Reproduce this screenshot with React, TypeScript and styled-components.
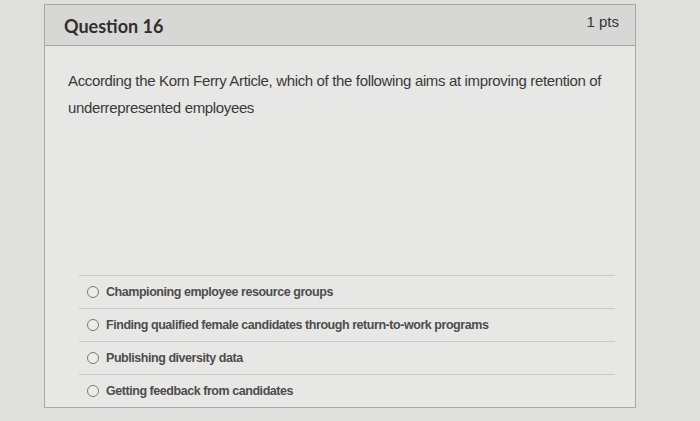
import React from 'react';
import styled, { createGlobalStyle } from 'styled-components';

const answers = [
  'Championing employee resource groups',
  'Finding qualified female candidates through return-to-work programs',
  'Publishing diversity data',
  'Getting feedback from candidates',
];

const GlobalStyle = createGlobalStyle`
  html, body {
    margin: 0;
    padding: 0;
    background: #dfdfde;
  }
`;

const Page = styled.div`
  width: 700px;
  height: 421px;
  padding: 4px 0 0 44px;
  box-sizing: border-box;
  overflow: hidden;
`;

const Card = styled.div`
  width: 592px;
  height: 404px;
  display: flex;
  flex-direction: column;
  box-sizing: border-box;
  border: 1px solid #a9a9a9;
  background: #e7e7e6;
`;

const Header = styled.div`
  height: 41px;
  flex-shrink: 0;
  display: flex;
  justify-content: space-between;
  align-items: center;
  padding: 0 16px 0 19px;
  box-sizing: border-box;
  background: #d7d7d6;
  border-bottom: 1px solid #a4a4a4;
`;

const Title = styled.div`
  font-family: Lato, 'Liberation Sans', sans-serif;
  font-size: 18px;
  font-weight: 700;
  color: #2f2f2f;
  padding-top: 2px;
`;

const Points = styled.div`
  font-family: 'Liberation Sans', Arial, sans-serif;
  font-size: 15px;
  color: #333;
  align-self: flex-start;
  padding-top: 8px;
`;

const Body = styled.div`
  flex: 1;
  display: flex;
  flex-direction: column;
  padding: 21px 20px 0 23px;
`;

const QuestionText = styled.p`
  margin: 0;
  font-family: 'Liberation Sans', Arial, sans-serif;
  font-size: 15px;
  line-height: 27px;
  letter-spacing: -0.35px;
  color: #3a3a3a;
  max-width: 545px;
`;

const AnswerList = styled.div`
  margin: auto 0 0 11px;
  display: flex;
  flex-direction: column;
`;

const AnswerRow = styled.label`
  height: 33px;
  display: flex;
  align-items: center;
  gap: 7px;
  padding-left: 8px;
  border-top: 1px solid #c9c9c8;
  font-family: 'Liberation Sans', Arial, sans-serif;
  font-size: 12.5px;
  font-weight: 700;
  letter-spacing: -0.45px;
  color: #4d4d4d;
  box-sizing: border-box;
`;

const Radio = styled.span`
  width: 12px;
  height: 12px;
  border-radius: 50%;
  border: 1.5px solid #7a7a7a;
  box-sizing: border-box;
  background: #ececeb;
`;

const App = () => (
  <Page>
    <GlobalStyle />
    <Card>
      <Header>
        <Title>Question 16</Title>
        <Points>1 pts</Points>
      </Header>
      <Body>
        <QuestionText>
          According the Korn Ferry Article, which of the following aims at improving retention of
          underrepresented employees
        </QuestionText>
        <AnswerList>
          {answers.map((a) => (
            <AnswerRow key={a}>
              <Radio />
              {a}
            </AnswerRow>
          ))}
        </AnswerList>
      </Body>
    </Card>
  </Page>
);

export default App;
